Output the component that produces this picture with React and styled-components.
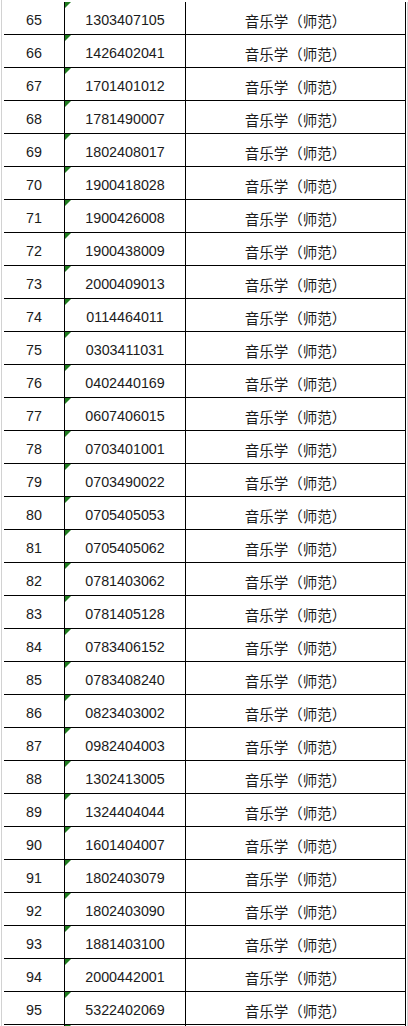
import styled, { createGlobalStyle } from 'styled-components'

const rows = [
  [65, '1303407105'],
  [66, '1426402041'],
  [67, '1701401012'],
  [68, '1781490007'],
  [69, '1802408017'],
  [70, '1900418028'],
  [71, '1900426008'],
  [72, '1900438009'],
  [73, '2000409013'],
  [74, '0114464011'],
  [75, '0303411031'],
  [76, '0402440169'],
  [77, '0607406015'],
  [78, '0703401001'],
  [79, '0703490022'],
  [80, '0705405053'],
  [81, '0705405062'],
  [82, '0781403062'],
  [83, '0781405128'],
  [84, '0783406152'],
  [85, '0783408240'],
  [86, '0823403002'],
  [87, '0982404003'],
  [88, '1302413005'],
  [89, '1324404044'],
  [90, '1601404007'],
  [91, '1802403079'],
  [92, '1802403090'],
  [93, '1881403100'],
  [94, '2000442001'],
  [95, '5322402069'],
]

const MAJOR = '音乐学（师范）'

const App = () => {
  return (
    <Sheet>
      {rows.map(([no, id]) => (
        <Row key={no}>
          <Cell>{no}</Cell>
          <Cell $text>{id}</Cell>
          <Cell $cjk>{MAJOR}</Cell>
          <Gap />
        </Row>
      ))}
      <Row $stub>
        <Cell />
        <Cell $text />
        <Cell />
        <Gap />
      </Row>
    </Sheet>
  )
}

export default App

const GlobalStyle = createGlobalStyle`
  html, body {
    margin: 0;
    padding: 0;
    background: #fff;
    overflow: hidden;
  }
`

const SheetWrap = styled.div`
  margin-left: 1px;
  border-left: 1px solid #d2d2d2;
  padding: 2px 0 0 2px;
  height: 1026px;
  box-sizing: border-box;
  overflow: hidden;
  font-family: 'Liberation Sans', 'Noto Sans CJK SC', sans-serif;
  font-size: 14.3px;
  color: #1b1b1b;
`

const Sheet = ({ children }) => (
  <>
    <GlobalStyle />
    <SheetWrap>{children}</SheetWrap>
  </>
)

const Row = styled.div`
  display: grid;
  grid-template-columns: 61px 121px 220px 2px;
  height: ${(p) => (p.$stub ? '8px' : '33px')};
`

const Cell = styled.div`
  position: relative;
  box-sizing: border-box;
  display: flex;
  align-items: center;
  justify-content: center;
  padding-top: 4px;
  border-right: 1px solid #000;
  border-bottom: 1px solid #000;
  white-space: nowrap;
  font-family: ${(p) =>
    p.$cjk
      ? "'Noto Sans CJK SC', 'Liberation Sans', sans-serif"
      : "'Liberation Sans', 'Noto Sans CJK SC', sans-serif"};
  font-size: ${(p) => (p.$cjk ? '14.5px' : '14.3px')};

  ${(p) =>
    p.$text &&
    `
    &::before {
      content: '';
      position: absolute;
      top: 0;
      left: 0;
      width: 0;
      height: 0;
      border-top: 6px solid #1e7b1e;
      border-right: 6px solid transparent;
    }
  `}
`

const Gap = styled.div`
  box-sizing: border-box;
  border-right: 1px solid #d2d2d2;
`
